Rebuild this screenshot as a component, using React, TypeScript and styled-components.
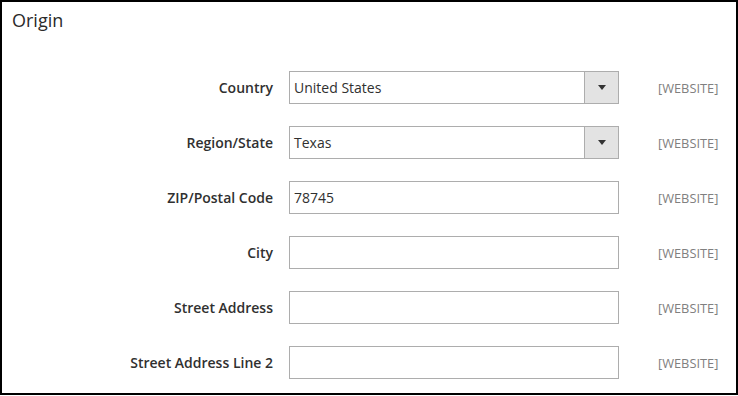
import { FC } from 'react';
import styled, { createGlobalStyle } from 'styled-components';

const GlobalStyle = createGlobalStyle`
  html, body {
    margin: 0;
    padding: 0;
    background: #fff;
  }
  body {
    font-family: 'Open Sans', 'Noto Sans', sans-serif;
    color: #303030;
  }
`;

type Field = {
  label: string;
  value?: string;
  select?: boolean;
};

const fields: Field[] = [
  { label: 'Country', value: 'United States', select: true },
  { label: 'Region/State', value: 'Texas', select: true },
  { label: 'ZIP/Postal Code', value: '78745' },
  { label: 'City' },
  { label: 'Street Address' },
  { label: 'Street Address Line 2' },
];

const App: FC = () => (
  <>
    <GlobalStyle />
    <Panel>
      <Title>Origin</Title>
      <Form>
        {fields.map((f) => (
          <Row key={f.label}>
            <Label>{f.label}</Label>
            <Control>
              <Value>{f.value}</Value>
              {f.select && (
                <Arrow>
                  <svg width="8" height="5" viewBox="0 0 8 5">
                    <path d="M0 0h8L4 5z" fill="#333" />
                  </svg>
                </Arrow>
              )}
            </Control>
            <Scope>[WEBSITE]</Scope>
          </Row>
        ))}
      </Form>
    </Panel>
  </>
);

const Panel = styled.div`
  box-sizing: border-box;
  width: 738px;
  height: 395px;
  border: 2px solid #000;
  background: #fff;
  overflow: hidden;
`;

const Title = styled.div`
  padding: 6px 0 0 10px;
  height: 25px;
  font-size: 18px;
  line-height: 25px;
  font-weight: 400;
  color: #2a2a2a;
`;

const Form = styled.div`
  display: flex;
  flex-direction: column;
  gap: 22px;
  margin-top: 38px;
`;

const Row = styled.div`
  display: grid;
  grid-template-columns: 271px 330px auto;
  column-gap: 16px;
  align-items: center;
  height: 33px;
`;

const Label = styled.div`
  text-align: right;
  font-size: 14px;
  font-weight: 600;
  color: #303030;
`;

const Control = styled.div`
  box-sizing: border-box;
  height: 33px;
  border: 1px solid #adadad;
  display: flex;
  align-items: stretch;
  background: #fff;
`;

const Value = styled.div`
  flex: 1;
  padding-left: 4px;
  font-size: 14px;
  line-height: 31px;
  color: #303030;
`;

const Arrow = styled.div`
  width: 33px;
  border-left: 1px solid #adadad;
  background: #e3e3e3;
  display: flex;
  align-items: center;
  justify-content: center;
`;

const Scope = styled.div`
  margin-left: 23px;
  font-size: 12.8px;
  color: #808080;
`;

export default App;
